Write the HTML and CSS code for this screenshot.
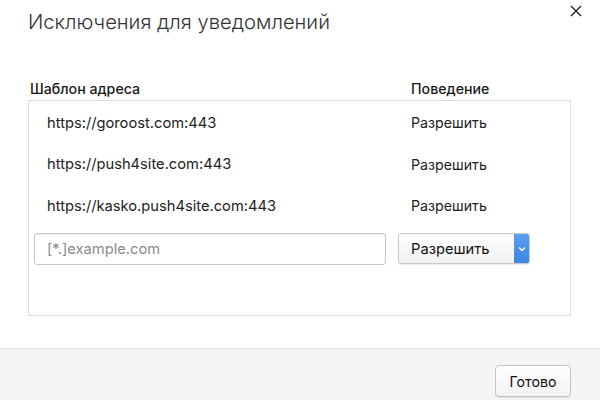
FILE: index.html
```html
<!DOCTYPE html>
<html lang="ru">
<head>
    <meta charset="UTF-8">
    <title>Исключения для уведомлений</title>
    <link rel="stylesheet" href="styles.css">
</head>
<body>

    <div class="dialog">

        <header class="head">
            <h1>Исключения для уведомлений</h1>
            <button class="close" aria-label="Закрыть">
                <svg width="12" height="12" viewBox="0 0 12 12">
                    <path d="M1 1 L11 11 M11 1 L1 11" stroke="#222" stroke-width="1.4" fill="none"/>
                </svg>
            </button>
        </header>

        <section class="body">
            <div class="cols">
                <span class="col-pattern">Шаблон адреса</span>
                <span class="col-behavior">Поведение</span>
            </div>

            <div class="list">
                <div class="row">
                    <span class="site">https://goroost.com:443</span>
                    <span class="action">Разрешить</span>
                </div>
                <div class="row">
                    <span class="site">https://push4site.com:443</span>
                    <span class="action">Разрешить</span>
                </div>
                <div class="row">
                    <span class="site">https://kasko.push4site.com:443</span>
                    <span class="action">Разрешить</span>
                </div>

                <div class="new-row">
                    <input class="pattern" type="text" placeholder="[*.]example.com">
                    <div class="select">
                        <span class="select-label">Разрешить</span>
                        <span class="select-arrow">
                            <svg width="8" height="6" viewBox="0 0 8 6">
                                <path d="M1 1.5 L4 4.5 L7 1.5" stroke="#fff" stroke-width="1.4" fill="none"/>
                            </svg>
                        </span>
                    </div>
                </div>
            </div>
        </section>

        <footer class="foot">
            <button class="done">Готово</button>
        </footer>

    </div>

</body>
</html>
```

FILE: styles.css
```css
body {
    margin: 0;
    font-family: 'Inter', 'Liberation Sans', sans-serif;
    color: #222;
    background-color: #fff;
}

.dialog {
    height: 400px;
    display: flex;
    flex-direction: column;
}

/* title bar */
.head {
    display: flex;
    justify-content: space-between;
    align-items: flex-start;
    padding: 0 18px 0 28px;
}

.head h1 {
    margin: 8px 0 0 0;
    font-size: 20.2px;
    font-weight: 300;
    line-height: 28px;
    color: #333;
}

.close {
    margin-top: 5px;
    padding: 0;
    border: none;
    background: none;
    width: 12px;
    height: 12px;
    display: flex;
}

/* exceptions table */
.body {
    flex: 1;
    padding: 0 29px 0 28px;
}

.cols {
    display: flex;
    margin-top: 43px;
    padding-left: 2px;
    font-size: 14.2px;
    font-weight: 500;
    line-height: 20px;
    color: #1a1a1a;
}

.col-pattern {
    width: 381px;
}

.list {
    margin-top: 1px;
    height: 216px;
    border: 1px solid #ddd;
    box-sizing: border-box;
    padding-top: 1px;
}

.row {
    display: flex;
    align-items: center;
    height: 41.5px;
    padding-left: 18px;
    font-size: 14.7px;
    color: #222;
}

.site {
    width: 364px;
}

.action {
    font-size: 14.2px;
}

.new-row {
    display: flex;
    align-items: center;
    gap: 12px;
    padding: 6px 0 0 5px;
}

.pattern {
    width: 352px;
    height: 32px;
    box-sizing: border-box;
    border: 1px solid #c4c4c4;
    border-radius: 3px;
    padding: 0 12px;
    font-family: inherit;
    font-size: 14.7px;
    color: #222;
    box-shadow: inset 0 1px 1px rgba(0, 0, 0, 0.06);
}

.pattern::placeholder {
    color: #8a8a8a;
}

.select {
    display: flex;
    width: 132px;
    height: 31px;
    box-sizing: border-box;
    border: 1px solid #c8c8c8;
    border-radius: 3px;
    background: linear-gradient(#fdfdfd, #f1f1f1);
    overflow: hidden;
    box-shadow: 0 1px 1px rgba(0, 0, 0, 0.08);
}

.select-label {
    flex: 1;
    display: flex;
    align-items: center;
    padding-left: 12px;
    font-size: 14.7px;
    color: #111;
}

.select-arrow {
    width: 15px;
    display: flex;
    align-items: center;
    justify-content: center;
    background: linear-gradient(#5aa0f0, #3c86e0);
}

/* bottom bar */
.foot {
    height: 51px;
    display: flex;
    justify-content: flex-end;
    align-items: flex-start;
    padding: 0 29px;
    background-color: #f5f5f5;
    border-top: 1px solid #e2e2e2;
}

.done {
    margin-top: 16px;
    width: 76px;
    height: 32px;
    border: 1px solid #c4c4c4;
    border-radius: 4px;
    background: linear-gradient(#fefefe, #f3f3f3);
    font-family: inherit;
    font-size: 14.2px;
    color: #111;
    box-shadow: 0 1px 1px rgba(0, 0, 0, 0.08);
}
```
